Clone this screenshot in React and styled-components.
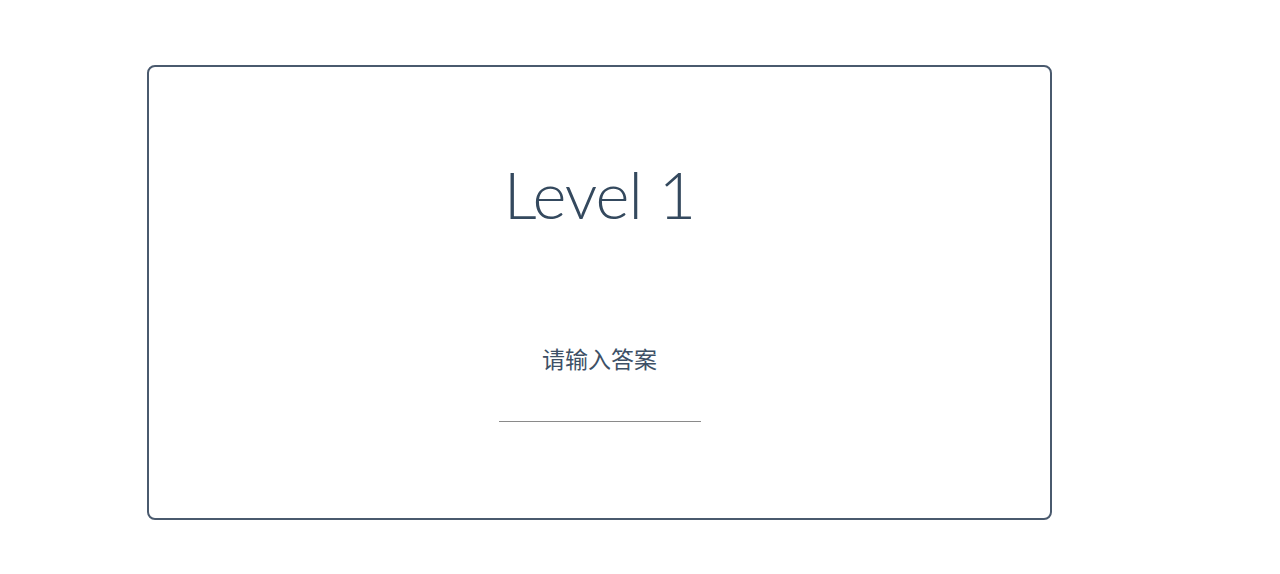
import styled, { createGlobalStyle } from 'styled-components'

const GlobalStyle = createGlobalStyle`
      body {
            margin: 0;
            background: #fff;
            font-family: Lato, "Noto Sans CJK SC", sans-serif;
      }
`

const Page = styled.div`
      padding: 65px 0 0 147px;
`

const Card = styled.div`
      box-sizing: border-box;
      width: 905px;
      height: 455px;
      border: 2px solid #4a5a6e;
      border-radius: 8px;
      display: flex;
      flex-direction: column;
      align-items: center;
      padding-top: 95px;
`

const Title = styled.h1`
      margin: 0;
      font-family: Lato, sans-serif;
      font-weight: 300;
      font-size: 65px;
      line-height: 65px;
      letter-spacing: -1px;
      color: #34495e;
`

const Prompt = styled.div`
      margin-top: 116px;
      font-family: "Noto Sans CJK SC", sans-serif;
      font-size: 23px;
      line-height: 30px;
      color: #3d5066;
`

const AnswerInput = styled.input`
      margin-top: 20px;
      width: 202px;
      height: 28px;
      border: none;
      border-bottom: 1px solid #8a8a8a;
      outline: none;
      background: transparent;
      text-align: center;
      font-family: Lato, "Noto Sans CJK SC", sans-serif;
      font-size: 18px;
      color: #34495e;
      padding: 0;
`

export default function App() {
      return (
            <Page>
                  <GlobalStyle />
                  <Card>
                        <Title>Level 1</Title>
                        <Prompt>请输入答案</Prompt>
                        <AnswerInput type="text" />
                  </Card>
            </Page>
      )
}
